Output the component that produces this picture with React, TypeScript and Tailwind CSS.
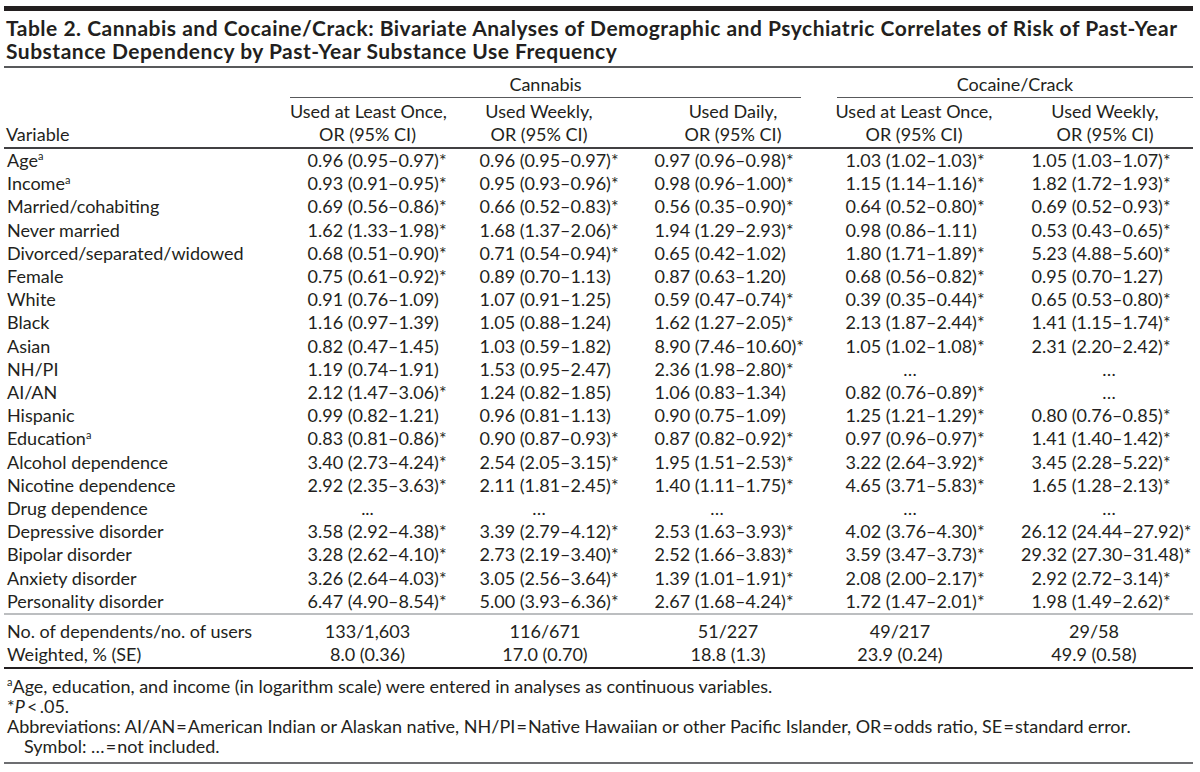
import React from 'react'

const grid = 'grid grid-cols-[286px_155px_188px_200px_162px_198px]'

interface Row {
  label: string
  sup?: boolean
  values: string[]
}

const rows: Row[] = [
  { label: 'Age', sup: true, values: ['0.96 (0.95–0.97)*', '0.96 (0.95–0.97)*', '0.97 (0.96–0.98)*', '1.03 (1.02–1.03)*', '1.05 (1.03–1.07)*'] },
  { label: 'Income', sup: true, values: ['0.93 (0.91–0.95)*', '0.95 (0.93–0.96)*', '0.98 (0.96–1.00)*', '1.15 (1.14–1.16)*', '1.82 (1.72–1.93)*'] },
  { label: 'Married/cohabiting', values: ['0.69 (0.56–0.86)*', '0.66 (0.52–0.83)*', '0.56 (0.35–0.90)*', '0.64 (0.52–0.80)*', '0.69 (0.52–0.93)*'] },
  { label: 'Never married', values: ['1.62 (1.33–1.98)*', '1.68 (1.37–2.06)*', '1.94 (1.29–2.93)*', '0.98 (0.86–1.11)', '0.53 (0.43–0.65)*'] },
  { label: 'Divorced/separated/widowed', values: ['0.68 (0.51–0.90)*', '0.71 (0.54–0.94)*', '0.65 (0.42–1.02)', '1.80 (1.71–1.89)*', '5.23 (4.88–5.60)*'] },
  { label: 'Female', values: ['0.75 (0.61–0.92)*', '0.89 (0.70–1.13)', '0.87 (0.63–1.20)', '0.68 (0.56–0.82)*', '0.95 (0.70–1.27)'] },
  { label: 'White', values: ['0.91 (0.76–1.09)', '1.07 (0.91–1.25)', '0.59 (0.47–0.74)*', '0.39 (0.35–0.44)*', '0.65 (0.53–0.80)*'] },
  { label: 'Black', values: ['1.16 (0.97–1.39)', '1.05 (0.88–1.24)', '1.62 (1.27–2.05)*', '2.13 (1.87–2.44)*', '1.41 (1.15–1.74)*'] },
  { label: 'Asian', values: ['0.82 (0.47–1.45)', '1.03 (0.59–1.82)', '8.90 (7.46–10.60)*', '1.05 (1.02–1.08)*', '2.31 (2.20–2.42)*'] },
  { label: 'NH/PI', values: ['1.19 (0.74–1.91)', '1.53 (0.95–2.47)', '2.36 (1.98–2.80)*', '…', '…'] },
  { label: 'AI/AN', values: ['2.12 (1.47–3.06)*', '1.24 (0.82–1.85)', '1.06 (0.83–1.34)', '0.82 (0.76–0.89)*', '…'] },
  { label: 'Hispanic', values: ['0.99 (0.82–1.21)', '0.96 (0.81–1.13)', '0.90 (0.75–1.09)', '1.25 (1.21–1.29)*', '0.80 (0.76–0.85)*'] },
  { label: 'Education', sup: true, values: ['0.83 (0.81–0.86)*', '0.90 (0.87–0.93)*', '0.87 (0.82–0.92)*', '0.97 (0.96–0.97)*', '1.41 (1.40–1.42)*'] },
  { label: 'Alcohol dependence', values: ['3.40 (2.73–4.24)*', '2.54 (2.05–3.15)*', '1.95 (1.51–2.53)*', '3.22 (2.64–3.92)*', '3.45 (2.28–5.22)*'] },
  { label: 'Nicotine dependence', values: ['2.92 (2.35–3.63)*', '2.11 (1.81–2.45)*', '1.40 (1.11–1.75)*', '4.65 (3.71–5.83)*', '1.65 (1.28–2.13)*'] },
  { label: 'Drug dependence', values: ['...', '…', '…', '…', '…'] },
  { label: 'Depressive disorder', values: ['3.58 (2.92–4.38)*', '3.39 (2.79–4.12)*', '2.53 (1.63–3.93)*', '4.02 (3.76–4.30)*', '26.12 (24.44–27.92)*'] },
  { label: 'Bipolar disorder', values: ['3.28 (2.62–4.10)*', '2.73 (2.19–3.40)*', '2.52 (1.66–3.83)*', '3.59 (3.47–3.73)*', '29.32 (27.30–31.48)*'] },
  { label: 'Anxiety disorder', values: ['3.26 (2.64–4.03)*', '3.05 (2.56–3.64)*', '1.39 (1.01–1.91)*', '2.08 (2.00–2.17)*', '2.92 (2.72–3.14)*'] },
  { label: 'Personality disorder', values: ['6.47 (4.90–8.54)*', '5.00 (3.93–6.36)*', '2.67 (1.68–4.24)*', '1.72 (1.47–2.01)*', '1.98 (1.49–2.62)*'] },
]

const totals = [
  { label: 'No. of dependents/no. of users', values: ['133/1,603', '116/671', '51/227', '49/217', '29/58'] },
  { label: 'Weighted, % (SE)', values: ['8.0 (0.36)', '17.0 (0.70)', '18.8 (1.3)', '23.9 (0.24)', '49.9 (0.58)'] },
]

const headers = ['Used at Least Once,', 'Used Weekly,', 'Used Daily,', 'Used at Least Once,', 'Used Weekly,']

// where the decimal point sits in each column
const valuePad = ['pl-[6px]', 'pl-[23px]', 'pl-[10px]', 'pl-[1px]', 'pl-[25px]']
const ellipsisPos = ['text-center', 'text-center', 'text-center pr-[32px]', 'text-center pr-[8px]', 'text-center pl-[30px]']
const totalPos = ['text-center', 'text-center pl-[12px]', 'text-center pr-[10px]', 'text-center pr-[28px]', 'text-center']
const headerPos = ['text-center', 'text-center', 'text-center', 'text-center', 'text-center pl-[22px]']

const Value = ({ v, col }: { v: string; col: number }) => {
  const m = v.match(/^(\d+)(\..*)$/)
  if (!m) {
    return <div className={ellipsisPos[col]}>{v}</div>
  }
  return (
    <div className={`whitespace-nowrap ${valuePad[col]}`}>
      <span className="inline-block w-[22px] text-right">{m[1]}</span>
      {m[2]}
    </div>
  )
}

export default function App() {
  return (
    <div className="min-h-[772px] bg-white text-[#231f20] font-['Lato',sans-serif]">
      <div className="ml-[4px] w-[1189px] pt-[6px]">
        <div className="h-[5px] bg-[#231f20]" />

        <h1 className="pt-[5px] pb-[4px] pl-[2px] text-[21px] leading-[23px] font-bold tracking-[0.5px] whitespace-nowrap">
          Table 2. Cannabis and Cocaine/Crack: Bivariate Analyses of Demographic and Psychiatric Correlates of Risk of Past-Year
          <br />
          Substance Dependency by Past-Year Substance Use Frequency
        </h1>
        <div className="h-[2px] bg-[#58595b]" />

        <div className="text-[18px] leading-[23px]">
          {/* group headings */}
          <div className="flex pt-[5px]">
            <div className="w-[286px]" />
            <div className="w-[511px] border-b border-[#58595b] pb-[1px] text-center">Cannabis</div>
            <div className="w-[36px]" />
            <div className="w-[356px] border-b border-[#58595b] pb-[1px] text-center">Cocaine/Crack</div>
          </div>

          {/* column headings */}
          <div className={`${grid} pt-[2px] pb-[1px]`}>
            <div className="self-end pl-[2px]">Variable</div>
            {headers.map((h, i) => (
              <div key={i} className={`whitespace-nowrap ${headerPos[i]}`}>
                <div>{h}</div>
                <div>OR (95% CI)</div>
              </div>
            ))}
          </div>
          <div className="h-[2px] bg-[#414042]" />

          {rows.map((r) => (
            <div key={r.label} className={`${grid} leading-[23.2px]`}>
              <div className="pl-[3px] whitespace-nowrap">
                {r.label}
                {r.sup && <sup className="text-[11px] top-[-0.6em]">a</sup>}
              </div>
              {r.values.map((v, i) => (
                <Value key={i} v={v} col={i} />
              ))}
            </div>
          ))}
          <div className="h-[2px] bg-[#bcbec0]" />

          <div className="pt-[5px]">
            {totals.map((t) => (
              <div key={t.label} className={grid}>
                <div className="pl-[3px] whitespace-nowrap">{t.label}</div>
                {t.values.map((v, i) => (
                  <div key={i} className={totalPos[i]}>{v}</div>
                ))}
              </div>
            ))}
          </div>
          <div className="mt-[1px] h-[2px] bg-[#231f20]" />

          <div className="pt-[7px] pl-[3px] leading-[20px] whitespace-nowrap">
            <p>
              <sup className="text-[11px] top-[-0.6em]">a</sup>Age, education, and income (in logarithm scale) were entered in analyses as continuous variables.
            </p>
            <p>
              *<i>P</i>{'\u2009<\u2009'}.05.
            </p>
            <p>
              Abbreviations: AI/AN{'\u200a=\u200a'}American Indian or Alaskan native, NH/PI{'\u200a=\u200a'}Native Hawaiian or other Pacific Islander, OR{'\u200a=\u200a'}odds ratio, SE{'\u200a=\u200a'}standard error.
            </p>
            <p className="pl-[17px]">Symbol: …{'\u200a=\u200a'}not included.</p>
          </div>
          <div className="mt-[6px] h-[2px] bg-[#6d6e71]" />
        </div>
      </div>
    </div>
  )
}
